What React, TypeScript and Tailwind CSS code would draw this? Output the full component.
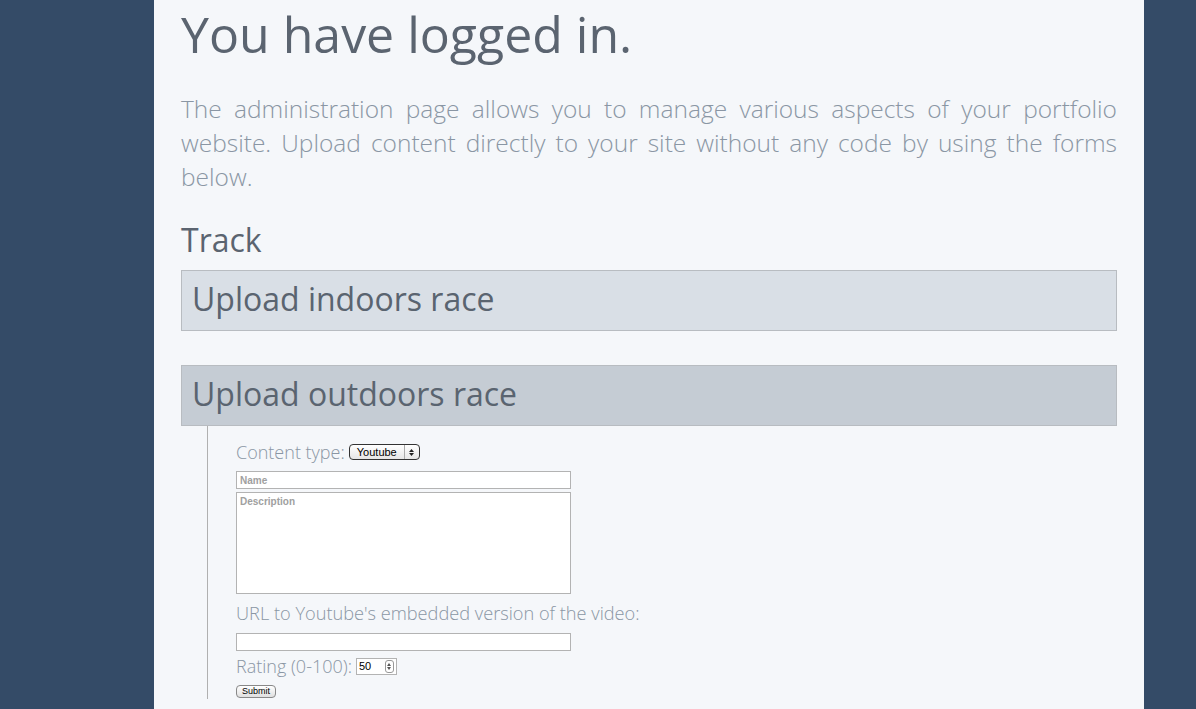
import React from "react";

const sans = "font-['Open_Sans',sans-serif]";
const ui = "font-['Liberation_Sans',Arial,sans-serif]";

const SectionBar = ({ title, tone }: { title: string; tone: string }) => (
  <div className={`border border-[#b8bcc1] ${tone} h-[61px] flex items-center px-[10px]`}>
    <h3 className={`${sans} text-[32px] leading-none text-[#5a6470] pb-[4px]`}>{title}</h3>
  </div>
);

const SelectBox = () => (
  <div className="inline-flex items-stretch h-[16px] rounded-[4px] border border-[#333] bg-gradient-to-b from-white to-[#e6e6e6] align-middle">
    <span className={`${ui} text-[11px] leading-[14px] text-black px-[7px]`}>Youtube</span>
    <span className="w-[15px] border-l border-[#aaa] flex flex-col items-center justify-center gap-[1px]">
      <svg width="5" height="3" viewBox="0 0 5 3"><path d="M2.5 0L5 3H0z" fill="#222" /></svg>
      <svg width="5" height="3" viewBox="0 0 5 3"><path d="M0 0h5L2.5 3z" fill="#222" /></svg>
    </span>
  </div>
);

const NumberBox = () => (
  <div className="inline-flex items-center h-[17px] w-[41px] border border-[#b3b3b3] bg-white align-middle">
    <span className={`${ui} text-[11px] text-black flex-1 pl-[2px] leading-none`}>50</span>
    <span className="w-[9px] h-[13px] mr-[2px] rounded-[3px] border border-[#999] flex flex-col items-center justify-center gap-[1px]">
      <svg width="4" height="3" viewBox="0 0 4 3"><path d="M2 0L4 3H0z" fill="#555" /></svg>
      <svg width="4" height="3" viewBox="0 0 4 3"><path d="M0 0h4L2 3z" fill="#555" /></svg>
    </span>
  </div>
);

export default function App() {
  return (
    <div className="min-h-[709px] bg-[#344b67] pl-[154px] pr-[52px]">
      <div className="bg-[#f5f7fa] min-h-[709px] px-[27px] pt-[1px]">
        <h1 className={`${sans} text-[50px] leading-[66px] text-[#5b6470]`}>You have logged in.</h1>
        <p className={`${sans} font-light text-[24.5px] leading-[34px] text-[#8a96a4] text-justify mt-[25px]`}>
          The administration page allows you to manage various aspects of your portfolio website. Upload
          content directly to your site without any code by using the forms below.
        </p>
        <h2 className={`${sans} text-[32px] leading-[40px] text-[#5b6470] mt-[26px] mb-[10px]`}>Track</h2>
        <SectionBar title="Upload indoors race" tone="bg-[#d9dfe6]" />
        <div className="h-[34px]" />
        <SectionBar title="Upload outdoors race" tone="bg-[#c5ccd4]" />
        <div className="ml-[26px] border-l border-[#b0b0b0] pl-[28px] pt-[15px] pb-[1px]">
          <form className="w-[335px]">
            <div className={`${sans} font-light text-[18px] leading-[22px] text-[#8a96a4] flex items-center gap-[4px]`}>
              <span>Content type:</span>
              <SelectBox />
            </div>
            <input
              placeholder="Name"
              className={`${ui} mt-[8px] block w-[335px] h-[18px] border border-[#b3b3b3] bg-white px-[3px] text-[10px] font-bold placeholder:text-[#a0a0a0]`}
            />
            <textarea
              placeholder="Description"
              className={`${ui} mt-[3px] block w-[335px] h-[102px] border border-[#b3b3b3] bg-white px-[3px] py-[1px] text-[10px] font-bold resize-none placeholder:text-[#a0a0a0]`}
            />
            <label className={`${sans} font-light block text-[18.2px] leading-[22px] text-[#8a96a4] mt-[8px] whitespace-nowrap`}>
              URL to Youtube's embedded version of the video:
            </label>
            <input className="mt-[9px] block w-[335px] h-[18px] border border-[#b3b3b3] bg-white" />
            <div className={`${sans} font-light text-[18px] leading-[22px] text-[#8a96a4] mt-[4px] flex items-center gap-[4px]`}>
              <span>Rating (0-100):</span>
              <NumberBox />
            </div>
            <button
              type="button"
              className={`${ui} mt-[8px] block h-[13px] px-[5px] rounded-[4px] border border-[#888] bg-gradient-to-b from-white to-[#e0e0e0] text-[9px] leading-[11px] text-black`}
            >
              Submit
            </button>
          </form>
        </div>
      </div>
    </div>
  );
}
